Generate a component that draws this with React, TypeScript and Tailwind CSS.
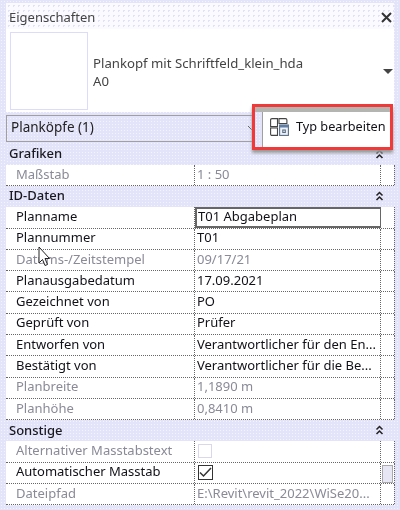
const dither =
  "bg-[#e3e3fa] bg-[radial-gradient(#f4f4ff_1px,transparent_1px)] bg-[length:3px_3px]";

type Row = { label: string; value?: string; muted?: boolean; active?: boolean; check?: "on" | "off"; scroll?: boolean };

const grafiken: Row[] = [{ label: "Maßstab", value: "1 : 50", muted: true }];

const idDaten: Row[] = [
  { label: "Planname", value: "T01 Abgabeplan", active: true },
  { label: "Plannummer", value: "T01" },
  { label: "Datums-/Zeitstempel", value: "09/17/21", muted: true },
  { label: "Planausgabedatum", value: "17.09.2021" },
  { label: "Gezeichnet von", value: "PO" },
  { label: "Geprüft von", value: "Prüfer" },
  { label: "Entworfen von", value: "Verantwortlicher für den En..." },
  { label: "Bestätigt von", value: "Verantwortlicher für die Be..." },
  { label: "Planbreite", value: "1,1890 m", muted: true },
  { label: "Planhöhe", value: "0,8410 m", muted: true },
];

const sonstige: Row[] = [
  { label: "Alternativer Masstabstext", muted: true, check: "off" },
  { label: "Automatischer Masstab", check: "on", scroll: true },
  { label: "Dateipfad", value: "E:\\Revit\\revit_2022\\WiSe20...", muted: true },
];

function Chevrons() {
  return (
    <svg width="9" height="10" viewBox="0 0 9 10" fill="none" stroke="#222" strokeWidth="1.5">
      <path d="M1.5 4.5 4.5 1.5 7.5 4.5" />
      <path d="M1.5 9 4.5 6 7.5 9" />
    </svg>
  );
}

function Band({ title, height = "h-[21px]", pad = "pb-[2px]" }: { title: string; height?: string; pad?: string }) {
  return (
    <div className={`flex ${height} items-center justify-between ${pad} pl-[3px] pr-[10px] font-medium text-[#18181f] ${dither}`}>
      <span>{title}</span>
      <Chevrons />
    </div>
  );
}

function PropRow({ row }: { row: Row }) {
  const tone = row.muted ? "text-[#8a8a98]" : "text-[#111118]";
  return (
    <div className="grid h-[21.3px] grid-cols-[189px_186px_14px] border-b border-dotted border-[#666] bg-white">
      <div className={`flex items-center border-r border-dotted border-[#666] pb-[2px] pl-[10px] ${tone}`}>{row.label}</div>
      <div
        className={`flex items-center whitespace-nowrap border-r border-dotted border-[#666] pb-[2px] pl-[2px] ${tone} ${
          row.active ? "border-2 border-solid border-[#333] pl-px" : ""
        }`}
      >
        {row.value}
        {row.check === "off" && <div className="ml-px mt-[2px] size-[14px] border border-[#d8d8ea]" />}
        {row.check === "on" && (
          <div className="ml-px mt-[2px] flex size-[15px] items-center justify-center border border-[#333]">
            <svg width="13" height="11" viewBox="0 0 13 11" fill="none" stroke="#333" strokeWidth="1.5">
              <path d="M1 5.5 4.5 9 12 1" />
            </svg>
          </div>
        )}
      </div>
      <div className="flex justify-center border-r border-dotted border-[#666]">
        {row.scroll && <div className="mt-[2px] h-[18px] w-[11px] border border-[#aaa] bg-[#e6e6f4]" />}
      </div>
    </div>
  );
}

function TypeIcon() {
  return (
    <svg width="19" height="18" viewBox="0 0 19 18" fill="none" stroke="#444" strokeWidth="1.1">
      <path d="M2 .6h5.500v8H.6V2Q.6.6 2 .6Z" />
      <path d="M9 .6h6.500q1.400 0 1.400 1.400v3.500H9Z" />
      <path d="M.6 10h6.900v7.400H2q-1.400 0-1.400-1.400Z" />
      <rect x="9.600" y="7" width="8.800" height="10.400" fill="#eef3fa" stroke="#5a6d85" />
      <rect x="9.600" y="7" width="8.800" height="2.500" fill="#5f7fa8" stroke="none" />
      <rect x="12.800" y="12" width="2.500" height="2.500" stroke="#5a6d85" />
    </svg>
  );
}

export default function App() {
  return (
    <div
      className={`relative h-[510px] w-[400px] overflow-hidden pl-[6px] pr-[6px] pt-[3px] font-['Noto_Sans',sans-serif] text-[13px] leading-none blur-[0.3px] ${dither}`}
    >
      {/* Titel */}
      <div className="flex h-[26px] items-center justify-between bg-[#fbfbff] bg-[radial-gradient(#e2e2f6_1px,transparent_1px)] bg-[length:5px_5px] pl-[3px] pr-[2px] pt-[2px]">
        <span className="text-[#444]">Eigenschaften</span>
        <svg width="11" height="11" viewBox="0 0 11 11" stroke="#333" strokeWidth="2">
          <path d="M1 1 10 10M10 1 1 10" />
        </svg>
      </div>

      {/* Vorschau */}
      <div className="flex h-[83px] items-center bg-white pl-[4px]">
        <div className="h-[78px] w-[78px] border border-[#dcdcfa]" />
        <div className="ml-[5px] mt-[4px] flex flex-col gap-[5px] text-[13.200px] text-[#444]">
          <span>Plankopf mit Schriftfeld_klein_hda</span>
          <span>A0</span>
        </div>
        <div className="ml-auto mr-px mt-[2px] h-0 w-0 border-x-[5px] border-t-[5px] border-x-transparent border-t-[#444]" />
      </div>

      {/* Typauswahl */}
      <div className="mt-[3px] flex h-[27px] w-[256px] items-center justify-between border border-[#a0a0a0] pb-px pl-[4px] pr-[5px] text-[#222]">
        <span className="text-[13.500px]">Planköpfe (1)</span>
        <svg width="9" height="6" viewBox="0 0 9 6" fill="none" stroke="#666">
          <path d="M1 1 4.500 4.500 8 1" />
        </svg>
      </div>

      {/* Eigenschaften */}
      <div>
        <Band title="Grafiken" height="h-[23px]" pad="pb-0" />
        {grafiken.map((row) => (
          <PropRow key={row.label} row={row} />
        ))}
        <Band title="ID-Daten" />
        {idDaten.map((row) => (
          <PropRow key={row.label} row={row} />
        ))}
        <Band title="Sonstige" pad="pb-px" />
        {sonstige.map((row) => (
          <PropRow key={row.label} row={row} />
        ))}
      </div>

      {/* Markierter Button */}
      <div className="absolute left-[252px] top-[104px] flex h-[46px] w-[141px] flex-col border-[3px] border-[#f03a3a] shadow-[0_3px_3px_#999]">
        <div className="h-[5px] bg-[#b4b4b0]" />
        <div className="flex flex-1">
          <div className={`w-[8px] border-r border-[#a0a0a0] ${dither}`} />
          <div className="flex flex-1 items-center gap-[7px] bg-white pb-[6px] pl-[7px]">
            <TypeIcon />
            <span className="whitespace-nowrap text-[12.700px] text-[#111118]">Typ bearbeiten</span>
          </div>
        </div>
      </div>

      {/* Mauszeiger */}
      <svg className="absolute left-[37px] top-[246px]" width="14" height="22" viewBox="0 0 14 22" fill="#fff" stroke="#222">
        <path d="M2 1V17L5.500 13.500 8 19.500 10.500 18.500 8 12.500H12.500Z" />
      </svg>
    </div>
  );
}
